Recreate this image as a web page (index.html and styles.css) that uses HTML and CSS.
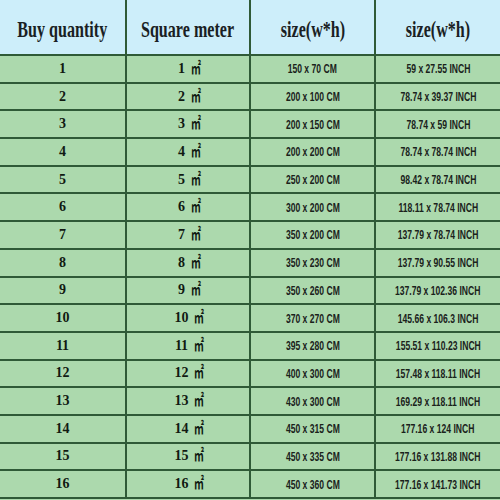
FILE: index.html
```html
<!DOCTYPE html>
<html>
<head>
<meta charset="utf-8">
<link rel="stylesheet" href="styles.css">
</head>
<body>
<div class="sheet">
  <div class="row head">
    <div class="cell"><span class="ht">Buy quantity</span></div>
    <div class="cell"><span class="ht">Square meter</span></div>
    <div class="cell"><span class="ht">size(w*h)</span></div>
    <div class="cell"><span class="ht">size(w*h)</span></div>
  </div>
  <div class="row"><div class="cell q">1</div><div class="cell m">1 <span class="sq">㎡</span></div><div class="cell s"><span>150 x 70 CM</span></div><div class="cell s"><span>59 x 27.55 INCH</span></div></div>
  <div class="row"><div class="cell q">2</div><div class="cell m">2 <span class="sq">㎡</span></div><div class="cell s"><span>200 x 100 CM</span></div><div class="cell s"><span>78.74 x 39.37 INCH</span></div></div>
  <div class="row"><div class="cell q">3</div><div class="cell m">3 <span class="sq">㎡</span></div><div class="cell s"><span>200 x 150 CM</span></div><div class="cell s"><span>78.74 x 59 INCH</span></div></div>
  <div class="row"><div class="cell q">4</div><div class="cell m">4 <span class="sq">㎡</span></div><div class="cell s"><span>200 x 200 CM</span></div><div class="cell s"><span>78.74 x 78.74 INCH</span></div></div>
  <div class="row"><div class="cell q">5</div><div class="cell m">5 <span class="sq">㎡</span></div><div class="cell s"><span>250 x 200 CM</span></div><div class="cell s"><span>98.42 x 78.74 INCH</span></div></div>
  <div class="row"><div class="cell q">6</div><div class="cell m">6 <span class="sq">㎡</span></div><div class="cell s"><span>300 x 200 CM</span></div><div class="cell s"><span>118.11 x 78.74 INCH</span></div></div>
  <div class="row"><div class="cell q">7</div><div class="cell m">7 <span class="sq">㎡</span></div><div class="cell s"><span>350 x 200 CM</span></div><div class="cell s"><span>137.79 x 78.74 INCH</span></div></div>
  <div class="row"><div class="cell q">8</div><div class="cell m">8 <span class="sq">㎡</span></div><div class="cell s"><span>350 x 230 CM</span></div><div class="cell s"><span>137.79 x 90.55 INCH</span></div></div>
  <div class="row"><div class="cell q">9</div><div class="cell m">9 <span class="sq">㎡</span></div><div class="cell s"><span>350 x 260 CM</span></div><div class="cell s"><span>137.79 x 102.36 INCH</span></div></div>
  <div class="row"><div class="cell q">10</div><div class="cell m">10 <span class="sq">㎡</span></div><div class="cell s"><span>370 x 270 CM</span></div><div class="cell s"><span>145.66 x 106.3 INCH</span></div></div>
  <div class="row"><div class="cell q">11</div><div class="cell m">11 <span class="sq">㎡</span></div><div class="cell s"><span>395 x 280 CM</span></div><div class="cell s"><span>155.51 x 110.23 INCH</span></div></div>
  <div class="row"><div class="cell q">12</div><div class="cell m">12 <span class="sq">㎡</span></div><div class="cell s"><span>400 x 300 CM</span></div><div class="cell s"><span>157.48 x 118.11 INCH</span></div></div>
  <div class="row"><div class="cell q">13</div><div class="cell m">13 <span class="sq">㎡</span></div><div class="cell s"><span>430 x 300 CM</span></div><div class="cell s"><span>169.29 x 118.11 INCH</span></div></div>
  <div class="row"><div class="cell q">14</div><div class="cell m">14 <span class="sq">㎡</span></div><div class="cell s"><span>450 x 315 CM</span></div><div class="cell s"><span>177.16 x 124 INCH</span></div></div>
  <div class="row"><div class="cell q">15</div><div class="cell m">15 <span class="sq">㎡</span></div><div class="cell s"><span>450 x 335 CM</span></div><div class="cell s"><span>177.16 x 131.88 INCH</span></div></div>
  <div class="row"><div class="cell q">16</div><div class="cell m">16 <span class="sq">㎡</span></div><div class="cell s"><span>450 x 360 CM</span></div><div class="cell s"><span>177.16 x 141.73 INCH</span></div></div>
</div>
</body>
</html>
```
FILE: styles.css
```css
html, body {
  margin: 0;
  padding: 0;
  background: #acd9ad;
}
.sheet {
  width: 500px;
  height: 500px;
  display: grid;
  grid-template-rows: 56px repeat(16, 1fr);
  padding-bottom: 1px;
  box-sizing: border-box;
  background: #acd9ad;
}
.row {
  display: grid;
  grid-template-columns: 125px 124px 125px 126px;
  border-bottom: 2px solid #2f5a37;
  box-sizing: border-box;
  min-height: 0;
}
.head {
  background: #cdeefa;
}
.cell {
  display: flex;
  align-items: center;
  justify-content: center;
  border-left: 2px solid #2f5a37;
  color: #111a12;
  white-space: nowrap;
  line-height: 1;
}
.cell:first-child {
  border-left: none;
}
.ht {
  font-family: "Liberation Serif", serif;
  font-size: 23px;
  font-weight: bold;
  display: inline-block;
  transform: scaleX(0.7);
  padding-top: 4px;
  color: #1a1f24;
}
.q, .m {
  font-family: "Liberation Serif", serif;
  font-weight: bold;
  font-size: 14px;
}
.m {
  padding-left: 6px;
}
.sq {
  font-family: "Noto Sans CJK SC", sans-serif;
  font-weight: bold;
  font-size: 16px;
  margin-left: 3px;
  display: inline-block;
  transform: translateY(-2px) scaleX(0.62);
  line-height: 1;
}
.s span {
  font-family: "Liberation Sans", sans-serif;
  font-weight: bold;
  font-size: 13px;
  display: inline-block;
  transform: scaleX(0.66);
  color: #1a221b;
}
```
